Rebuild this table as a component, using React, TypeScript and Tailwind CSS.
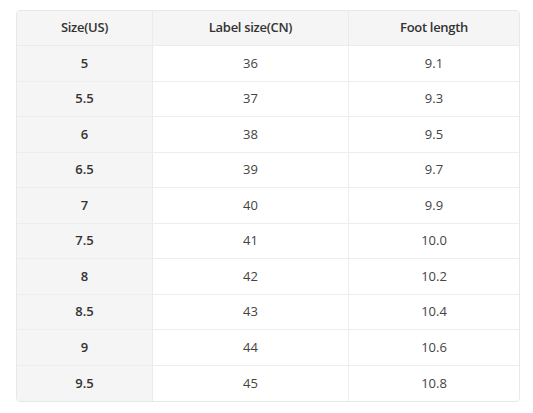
const rows = [
  ['5', '36', '9.1'],
  ['5.5', '37', '9.3'],
  ['6', '38', '9.5'],
  ['6.5', '39', '9.7'],
  ['7', '40', '9.9'],
  ['7.5', '41', '10.0'],
  ['8', '42', '10.2'],
  ['8.5', '43', '10.4'],
  ['9', '44', '10.6'],
  ['9.5', '45', '10.8'],
];

export default function App() {
  return (
    <div className="w-[533px] h-[413px] bg-white pt-[10px] pl-[16px]" style={{ fontFamily: '"Open Sans", "Noto Sans", sans-serif' }}>
      <div className="w-[504px] rounded-[4px] border border-[#e8e8e8] overflow-hidden text-[13px] text-[#333]">
        {/* Header */}
        <div className="grid grid-cols-[136px_196px_1fr] h-[35px] bg-[#f5f5f5] border-b border-[#ebebeb] font-semibold tracking-[-0.3px]">
          <div className="flex items-center justify-center border-r border-[#ebebeb]">Size(US)</div>
          <div className="flex items-center justify-center border-r border-[#ebebeb]">Label size(CN)</div>
          <div className="flex items-center justify-center">Foot length</div>
        </div>
        {rows.map((r, i) => (
          <div
            key={i}
            className={`grid grid-cols-[136px_196px_1fr] h-[35.5px] ${i < rows.length - 1 ? 'border-b border-[#ededed]' : ''}`}
          >
            <div className="flex items-center justify-center bg-[#f5f5f5] border-r border-[#ebebeb] font-semibold">{r[0]}</div>
            <div className="flex items-center justify-center border-r border-[#ededed] text-[#444]">{r[1]}</div>
            <div className="flex items-center justify-center text-[#444]">{r[2]}</div>
          </div>
        ))}
      </div>
    </div>
  );
}
